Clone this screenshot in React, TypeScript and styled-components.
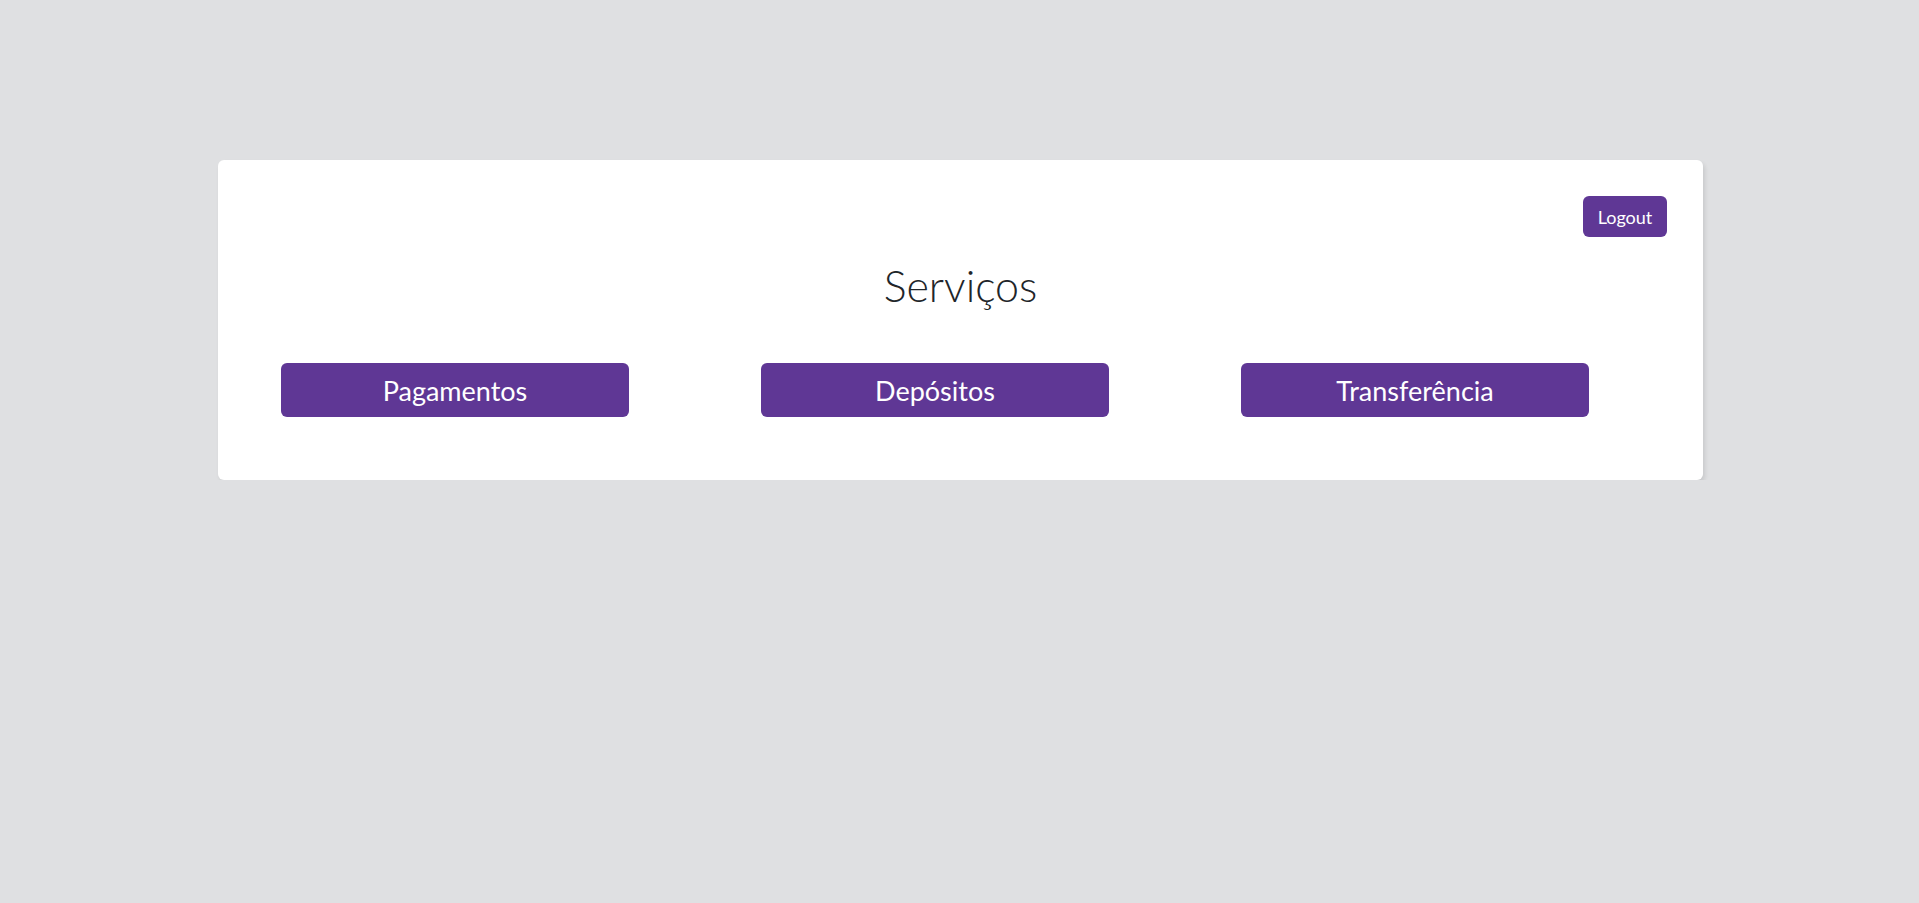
import React from "react";
import styled, { createGlobalStyle } from "styled-components";

const Global = createGlobalStyle`
  html, body {
    margin: 0;
    padding: 0;
    background: #dfe0e2;
    font-family: Lato, "Open Sans", sans-serif;
  }
  * { box-sizing: border-box; }
`;

const Page = styled.main`
  padding: 160px 0 0 2px;
  display: flex;
  justify-content: center;
`;

const Card = styled.section`
  width: 1485px;
  background: #ffffff;
  border-radius: 6px;
  box-shadow: 2px 3px 4px rgba(0, 0, 0, 0.1);
  padding: 36px 36px 63px 63px;
  display: flex;
  flex-direction: column;
`;

const TopBar = styled.header`
  display: flex;
  justify-content: flex-end;
`;

const LogoutButton = styled.button`
  height: 41px;
  width: 84px;
  border: none;
  border-radius: 6px;
  background: #5f3795;
  color: #ffffff;
  font-family: Lato, "Open Sans", sans-serif;
  font-size: 18px;
  cursor: pointer;
`;

const Title = styled.h1`
  margin: 21px 0 0 -27px;
  text-align: center;
  font-weight: 300;
  font-size: 43px;
  line-height: 55px;
  color: #212529;
`;

const ServiceGrid = styled.nav`
  margin-top: 50px;
  display: grid;
  grid-template-columns: repeat(3, 348px);
  column-gap: 132px;
`;

const ServiceButton = styled.button`
  height: 54px;
  border: none;
  border-radius: 6px;
  background: #5f3795;
  color: #ffffff;
  font-family: Lato, "Open Sans", sans-serif;
  font-size: 27px;
  cursor: pointer;
`;

const services = ["Pagamentos", "Depósitos", "Transferência"];

export default function App() {
  return (
    <>
      <Global />
      <Page>
        <Card>
          <TopBar>
            <LogoutButton>Logout</LogoutButton>
          </TopBar>
          <Title>Serviços</Title>
          <ServiceGrid>
            {services.map((s) => (
              <ServiceButton key={s}>{s}</ServiceButton>
            ))}
          </ServiceGrid>
        </Card>
      </Page>
    </>
  );
}
